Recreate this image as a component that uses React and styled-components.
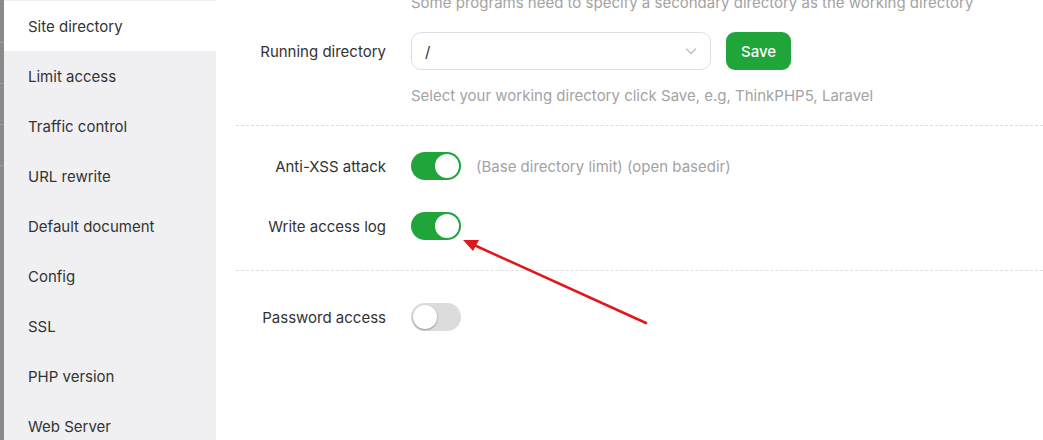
import React, { useState } from 'react';
import styled, { createGlobalStyle } from 'styled-components';

const GlobalStyle = createGlobalStyle`
  html, body {
    margin: 0;
    padding: 0;
    height: 440px;
    overflow: hidden;
    background: #fff;
    font-family: Inter, "Noto Sans", "Liberation Sans", sans-serif;
  }
`;

const Page = styled.div`
  position: relative;
  display: flex;
  height: 440px;
`;

const Backdrop = styled.div`
  width: 4px;
  flex-shrink: 0;
  background: #8a8a8a;
  display: flex;
  flex-direction: column;
  gap: 40px;
  padding-top: 42px;
`;

const BackdropLine = styled.span`
  height: 1px;
  background: #9c9c9c;
`;

const Sidebar = styled.nav`
  width: 212px;
  flex-shrink: 0;
  background: #f0f0f2;
  padding-top: 1px;
`;

const MenuItem = styled.div`
  height: 50px;
  display: flex;
  align-items: center;
  padding-left: 24px;
  font-size: 15px;
  color: #333;
  background: ${props => props.active ? '#fff' : 'transparent'};
`;

const Main = styled.main`
  flex: 1;
  padding-left: 20px;
  overflow: hidden;
`;

const Form = styled.div`
  margin-top: -7px;
  display: flex;
  flex-direction: column;
`;

const Hint = styled.div`
  padding-left: 175px;
  margin-top: ${props => props.top || 0}px;
  line-height: 20px;
  font-size: 15px;
  color: #a3a3a3;
  white-space: nowrap;
`;

const Row = styled.div`
  display: flex;
  align-items: center;
  gap: 25px;
  height: ${props => props.h || 40}px;
  margin-top: ${props => props.top || 0}px;
`;

const Label = styled.label`
  width: 150px;
  text-align: right;
  font-size: 15px;
  color: #333;
  white-space: nowrap;
`;

const Controls = styled.div`
  display: flex;
  align-items: center;
  gap: 15px;
`;

const Select = styled.div`
  width: 300px;
  height: 38px;
  box-sizing: border-box;
  border: 1px solid #dcdfe6;
  border-radius: 10px;
  display: flex;
  align-items: center;
  justify-content: space-between;
  padding: 0 12px 0 13px;
  font-size: 15px;
  color: #333;
`;

const SaveButton = styled.button`
  width: 65px;
  height: 38px;
  border: none;
  border-radius: 9px;
  background: #20a53a;
  color: #fff;
  font-family: inherit;
  font-size: 15px;
  font-weight: 500;
  cursor: pointer;
`;

const Divider = styled.div`
  margin-top: ${props => props.top || 0}px;
  border-top: 1px dashed #dedede;
`;

const Switch = styled.button`
  position: relative;
  width: 50px;
  height: 28px;
  border: none;
  padding: 0;
  border-radius: 14px;
  background: ${props => props.on ? '#20a53a' : '#dcdcdc'};
  cursor: pointer;

  &::after {
    content: '';
    position: absolute;
    top: 2px;
    left: ${props => props.on ? '24px' : '2px'};
    width: 24px;
    height: 24px;
    border-radius: 50%;
    background: #fff;
    box-shadow: ${props => props.on ? 'none' : '0 1px 2px rgba(0,0,0,0.35)'};
  }
`;

const Note = styled.span`
  font-size: 15px;
  color: #a3a3a3;
`;

const Arrow = styled.svg`
  position: absolute;
  left: 0;
  top: 0;
  pointer-events: none;
`;

const menu = [
  'Site directory',
  'Limit access',
  'Traffic control',
  'URL rewrite',
  'Default document',
  'Config',
  'SSL',
  'PHP version',
  'Web Server',
];

const App = () => {
  const [xss, setXss] = useState(true);
  const [log, setLog] = useState(true);
  const [pwd, setPwd] = useState(false);

  return (
    <Page>
      <GlobalStyle />
      <Backdrop>
        <BackdropLine />
        <BackdropLine />
        <BackdropLine />
        <BackdropLine />
      </Backdrop>
      <Sidebar>
        {menu.map((item, i) => (
          <MenuItem key={item} active={i === 0}>{item}</MenuItem>
        ))}
      </Sidebar>
      <Main>
        <Form>
          <Hint>Some programs need to specify a secondary directory as the working directory</Hint>
          <Row h={38} top={19}>
            <Label>Running directory</Label>
            <Controls>
              <Select>
                <span>/</span>
                <svg width="14" height="14" viewBox="0 0 14 14" fill="none">
                  <path d="M2.5 5l4.5 4.5L11.5 5" stroke="#b8bcc4" strokeWidth="1.2" strokeLinecap="round" strokeLinejoin="round" />
                </svg>
              </Select>
              <SaveButton>Save</SaveButton>
            </Controls>
          </Row>
          <Hint top={16}>Select your working directory click Save, e.g, ThinkPHP5, Laravel</Hint>
          <Divider top={19} />
          <Row top={20}>
            <Label>Anti-XSS attack</Label>
            <Controls>
              <Switch on={xss} onClick={() => setXss(!xss)} />
              <Note>(Base directory limit) (open basedir)</Note>
            </Controls>
          </Row>
          <Row top={20}>
            <Label>Write access log</Label>
            <Controls>
              <Switch on={log} onClick={() => setLog(!log)} />
            </Controls>
          </Row>
          <Divider top={24} />
          <Row top={26}>
            <Label>Password access</Label>
            <Controls>
              <Switch on={pwd} onClick={() => setPwd(!pwd)} />
            </Controls>
          </Row>
        </Form>
      </Main>
      <Arrow width="1043" height="440">
        <line x1="646" y1="323" x2="474" y2="245" stroke="#e0161b" strokeWidth="2.5" strokeLinecap="round" />
        <polygon points="463,240 479,240 473,251" fill="#e0161b" />
      </Arrow>
    </Page>
  );
};

export default App;
